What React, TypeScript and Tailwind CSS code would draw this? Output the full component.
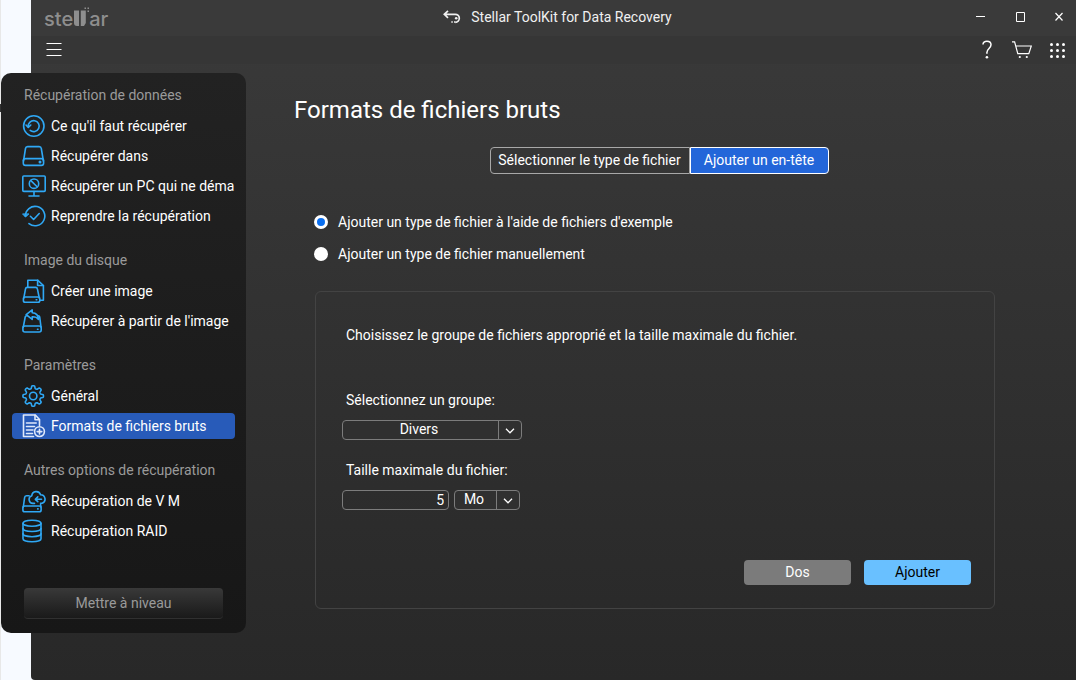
import React, { useState } from 'react';

type IconProps = { children: React.ReactNode };

function Icon({ children }: IconProps) {
  return (
    <svg
      aria-hidden="true"
      viewBox="0 0 24 24"
      className="size-6 shrink-0"
      fill="none"
      stroke="currentColor"
      strokeWidth="1.6"
      strokeLinecap="round"
      strokeLinejoin="round"
    >
      {children}
    </svg>
  );
}

const restoreIcon = (
  <Icon>
    <circle cx="11.8" cy="12" r="10.2" />
    <path d="M6.2 12.6a5.5 5.5 0 1 1 2 3.8" />
    <path d="M4 11l2.3 2.4L8.8 11" />
  </Icon>
);

const driveIcon = (
  <Icon>
    <path d="M1.5 17 3.500 4.500A2.200 2.200 0 0 1 5.700 2.600h11.400A2.200 2.200 0 0 1 19.300 4.500L21.400 17" />
    <rect x="1.300" y="14.600" width="20.300" height="6.800" rx="2.200" />
    <circle cx="18" cy="18" r="0.700" fill="currentColor" />
  </Icon>
);

const monitorIcon = (
  <Icon>
    <rect x="0.8" y="2" width="22.4" height="15.4" rx="1" />
    <path d="M12 17.500v4.200M7 22h10" />
    <circle cx="12" cy="9.700" r="4.700" />
    <path d="M8.900 6.600l6.200 6.200" />
  </Icon>
);

const resumeIcon = (
  <Icon>
    <path d="M3.400 12.200A9.700 9.700 0 1 1 7 19.600" />
    <path d="M.8 10.200l2.700 2.800 3.100-2.800z" fill="currentColor" strokeWidth="1" />
    <path d="M8.400 12.300l3.200 3.200 5.600-6" />
  </Icon>
);

const createImageIcon = (
  <Icon>
    <path d="M5.800 8V1.200h9.800l5.800 5.300v14.800h-3.600" />
    <path d="M15.600 1.200v5.300h5.800" />
    <path d="M1.800 19 3.500 9.900A1.800 1.800 0 0 1 5.200 8.400h8.500a1.800 1.800 0 0 1 1.700 1.500l1.900 9.100" />
    <rect x="1.400" y="18" width="16.400" height="5.200" rx="1.800" />
    <path d="M14.200 20.700h.6" />
  </Icon>
);

const recoverImageIcon = (
  <Icon>
    <path d="M5.200 6.800H4.700A1.500 1.500 0 0 0 3.200 8L1.300 18M15.700 6.800h.6A1.500 1.500 0 0 1 17.700 8l1.300 10" />
    <rect x="0.900" y="17" width="18.300" height="6" rx="2" />
    <path d="M4.200 5.600 10.200.900v2.800c4.400.200 6.200 2.800 6.400 6.800-1.500-2.200-3.400-2.800-6.400-2.700v2.600z" />
    <path d="M15.500 20.200h.500" />
  </Icon>
);

const rawFormatIcon = (
  <Icon>
    <path d="M11.500 22.500h-10V1h11.800l4.200 4.500v6" />
    <path d="M13 1.300v4.500h4.300" />
    <path d="M4.500 9h9.700M4.500 12.500h8M4.500 16h6.500M4.500 19.500h6" />
    <circle cx="17.500" cy="17.600" r="4.900" />
    <path d="M17.500 15.300v4.600M15.200 17.600h4.600" />
  </Icon>
);

const virtualMachineIcon = (
  <Icon>
    <path d="M1.300 18 2.600 8.600A2 2 0 0 1 4.500 6.800h2.600M18.600 15.500l.3 2.500" />
    <rect x="0.900" y="17" width="18.200" height="5.800" rx="1.800" />
    <path d="M12.500 14.400H11a3.900 3.900 0 0 1-1.200-7.600A4.500 4.500 0 0 1 18.600 5.800a4.400 4.400 0 0 1 1.600 8.500h-1.700" />
    <path d="M19.500 10.300h-6M15.800 7.900l-2.500 2.400 2.500 2.400" />
    <path d="M15.700 19.900h.4" />
  </Icon>
);

const raidIcon = (
  <Icon>
    <ellipse cx="10" cy="4.200" rx="9" ry="3" />
    <path d="M1 4.200v15.600c0 1.700 4 3 9 3s9-1.300 9-3V4.200" />
    <path d="M1 9.500c0 1.700 4 3 9 3s9-1.300 9-3M1 14.700c0 1.700 4 3 9 3s9-1.300 9-3" />
  </Icon>
);

// Outline of a gear with eight rounded teeth, one of them pointing up.
const gearPoints = Array.from({ length: 120 }, (_, i) => {
  const angle = (i / 120) * Math.PI * 2;
  const radius = 8.900 + 1.400 * Math.tanh(2.200 * Math.cos(8 * angle));
  return `${(11.200 + radius * Math.sin(angle)).toFixed(2)},${(12 - radius * Math.cos(angle)).toFixed(2)}`;
}).join(' ');

const settingsIcon = (
  <Icon>
    <polygon points={gearPoints} />
    <circle cx="11.200" cy="12" r="3.700" />
  </Icon>
);

const sections = [
  {
    title: 'Récupération de données',
    items: [
      { label: "Ce qu'il faut récupérer", icon: restoreIcon },
      { label: 'Récupérer dans', icon: driveIcon },
      { label: 'Récupérer un PC qui ne déma', icon: monitorIcon },
      { label: 'Reprendre la récupération', icon: resumeIcon },
    ],
  },
  {
    title: 'Image du disque',
    items: [
      { label: 'Créer une image', icon: createImageIcon },
      { label: "Récupérer à partir de l'image", icon: recoverImageIcon },
    ],
  },
  {
    title: 'Paramètres',
    items: [
      { label: 'Général', icon: settingsIcon },
      { label: 'Formats de fichiers bruts', icon: rawFormatIcon, active: true },
    ],
  },
  {
    title: 'Autres options de récupération',
    items: [
      { label: 'Récupération de V M', icon: virtualMachineIcon },
      { label: 'Récupération RAID', icon: raidIcon },
    ],
  },
];

function Logo() {
  return (
    <div className="mt-1 flex items-end font-['Inter',sans-serif] text-xl leading-5 font-medium text-[#8e8e8e]">
      <span>ste</span>
      <svg aria-hidden="true" viewBox="0 0 16 20" className="h-5 w-4 overflow-visible" fill="currentColor">
        <path d="M1 1.500h5v15.500H4Q1 17 1 14zM7.800 1.500h5v12.500L11 17H7.800z" />
        <path d="M11.500-1.500H13V0h-1.500zM14.500-1.500H16V0h-1.500zM14.500 1.500H16V3h-1.500z" />
      </svg>
      <span>ar</span>
    </div>
  );
}

function TitleBar() {
  return (
    <div className="grid h-9 grid-cols-[1fr_auto_1fr] items-center bg-[#3a3a3a] pr-[5px] pb-0.5 pl-[13px]">
      <Logo />
      <div className="flex items-center gap-2.5 text-[#f0f0f0]">
        <svg aria-hidden="true" viewBox="0 0 18 14" className="h-3.5 w-[18px]" fill="none" stroke="currentColor">
          <path d="M5 .8 1.300 4.300 5 7.800M1.500 4.300h10.800a4 4 0 0 1 0 8" strokeWidth="1.700" />
          <circle cx="13.200" cy="8.300" r="1.300" fill="currentColor" stroke="none" />
          <path d="M8.300 12h1.500M11 12h1.500" strokeWidth="1.400" />
        </svg>
        <span>Stellar ToolKit for Data Recovery</span>
      </div>
      <div className="flex justify-end gap-[15px]">
        <button aria-label="Réduire" className="grid size-6 place-items-center">
          <svg viewBox="0 0 10 10" className="size-2.5" stroke="currentColor">
            <path d="M0 4.500h9" />
          </svg>
        </button>
        <button aria-label="Agrandir" className="grid size-6 place-items-center">
          <svg viewBox="0 0 10 10" className="size-2.5" fill="none" stroke="currentColor">
            <path d="M1.500.5h8v9h-8z" />
          </svg>
        </button>
        <button aria-label="Fermer" className="grid size-6 place-items-center">
          <svg viewBox="0 0 10 10" className="size-2.5" stroke="currentColor" strokeWidth="1.200">
            <path d="M1.500 1l7 7.500M8.500 1l-7 7.500" />
          </svg>
        </button>
      </div>
    </div>
  );
}

function ToolBar() {
  return (
    <div className="mb-[9px] flex h-7 items-center justify-between bg-[#363636] pr-[7px] pl-[11px]">
      <button aria-label="Menu" className="grid size-6 place-items-center">
        <svg viewBox="0 0 16 14" className="h-3.5 w-4" stroke="currentColor">
          <path d="M.5.500h15M.5 6.500h15M.5 12.500h15" strokeWidth="1.200" />
        </svg>
      </button>
      <div className="flex gap-[11px]">
        <button aria-label="Aide" className="grid size-6 place-items-center">
          <svg viewBox="0 0 10 20" className="h-5 w-2.5" fill="none" stroke="currentColor" strokeWidth="1.500">
            <path d="M1 4.500C1 2.500 2.600 1.200 4.900 1.200S9 2.500 9 4.800C9 8.300 4.900 8.600 4.900 12.500v1.200" />
            <circle cx="4.900" cy="17.300" r="1.300" fill="currentColor" stroke="none" />
          </svg>
        </button>
        <button aria-label="Panier" className="grid size-6 place-items-center">
          <svg viewBox="0 0 20 18" className="h-[18px] w-5" fill="none" stroke="currentColor" strokeWidth="1.200">
            <path d="M0 .8h2.600L5.800 12.600h11L19.300 5H3.800" />
            <circle cx="7.800" cy="16" r="1.100" fill="currentColor" stroke="none" />
            <circle cx="14.800" cy="16" r="1.100" fill="currentColor" stroke="none" />
          </svg>
        </button>
        <button aria-label="Applications" className="grid size-6 place-items-center">
          <svg viewBox="0 0 16 16" className="size-4" fill="currentColor">
            {[2.5, 8.500, 14.500].map((y) =>
              [2.5, 8.500, 14.500].map((x) => <circle key={`${x}-${y}`} cx={x} cy={y} r="1.500" />),
            )}
          </svg>
        </button>
      </div>
    </div>
  );
}

function Sidebar() {
  return (
    <aside className="-ml-[30px] flex w-[245px] shrink-0 flex-col self-start rounded-[10px] bg-linear-to-b from-[#222222] to-[#171717] px-[11px] pt-[7px] pb-3.5">
      <nav className="flex flex-col gap-4">
        {sections.map((section) => (
          <section key={section.title}>
            <h2 className="mb-[3px] pl-3 leading-[30px] text-[#9a9a9a]">{section.title}</h2>
            <ul className="flex flex-col gap-1">
              {section.items.map((item) => (
                <li key={item.label}>
                  <a
                    href="#"
                    className={
                      'active' in item && item.active
                        ? 'flex h-[26px] items-center gap-[5px] rounded bg-[#285bb9] pl-2.5 text-[#dfe9fb]'
                        : 'flex h-[26px] items-center gap-[5px] rounded pl-2.5 text-[#2fa8f5]'
                    }
                  >
                    {item.icon}
                    <span className="whitespace-nowrap text-white">{item.label}</span>
                  </a>
                </li>
              ))}
            </ul>
          </section>
        ))}
      </nav>
      <button className="mx-3 mt-11 h-[31px] rounded border-b border-[#303030] bg-linear-to-b from-[#393939] to-[#1a1a1a] text-[#9a9a9a]">
        Mettre à niveau
      </button>
    </aside>
  );
}

type DropDownProps = { id: string; label?: string; options: string[]; wide?: boolean };

function DropDown({ id, label, options, wide }: DropDownProps) {
  return (
    <div className={wide ? 'relative h-5 w-[180px]' : 'relative h-5 w-[66px]'}>
      <select
        id={id}
        aria-label={label}
        className="block h-5 w-full appearance-none rounded border border-[#7c7c7c] bg-[#303030] pr-[26px] pb-0.5 text-center leading-4 [text-align-last:center]"
      >
        {options.map((option) => (
          <option key={option}>{option}</option>
        ))}
      </select>
      <span className="pointer-events-none absolute inset-y-px right-px grid w-[23px] place-items-center border-l border-[#7c7c7c]">
        <svg aria-hidden="true" viewBox="0 0 10 6" className="mt-0.5 h-1.5 w-2.5" fill="none" stroke="currentColor" strokeWidth="1.300">
          <path d="M1 .8l4 4 4-4" />
        </svg>
      </span>
    </div>
  );
}

const radioClass =
  'size-3.5 shrink-0 appearance-none rounded-full bg-white checked:border-[3px] checked:border-white checked:bg-[#0a6ff0]';

export default function App() {
  const [mode, setMode] = useState('sample');
  const [size, setSize] = useState('5');

  return (
    <div className="flex min-h-screen bg-[#f7faff] font-['Roboto',sans-serif] text-sm text-white">
      <div className="w-px bg-[#e8e8e8] pt-[104px]">
        <div className="h-2 bg-[#333333]" />
      </div>
      <div className="ml-[30px] flex min-w-0 flex-1 flex-col rounded-bl bg-linear-to-b from-[#3a3a3a] to-[#282828]">
        <header>
          <TitleBar />
          <ToolBar />
        </header>
        <div className="flex flex-1">
          <Sidebar />
          <main className="min-w-0 flex-1 pt-[21px] pr-[52px] pl-12">
            <h1 className="text-2xl leading-8">Formats de fichiers bruts</h1>

            <div className="mt-[21px] flex justify-center">
              <button className="h-[27px] w-[200px] rounded-l border border-[#a8a8a8] pb-0.5 whitespace-nowrap">
                Sélectionner le type de fichier
              </button>
              <button className="h-[27px] w-[139px] rounded-r border border-white bg-[#2366d9] pb-0.5 whitespace-nowrap">
                Ajouter un en-tête
              </button>
            </div>

            <div className="mt-[38px] ml-5 flex flex-col items-start gap-3">
              <label className="flex h-5 items-center gap-2.5">
                <input
                  type="radio"
                  name="mode"
                  className={radioClass}
                  checked={mode === 'sample'}
                  onChange={() => setMode('sample')}
                />
                Ajouter un type de fichier à l'aide de fichiers d'exemple
              </label>
              <label className="flex h-5 items-center gap-2.5">
                <input
                  type="radio"
                  name="mode"
                  className={radioClass}
                  checked={mode === 'manual'}
                  onChange={() => setMode('manual')}
                />
                Ajouter un type de fichier manuellement
              </label>
            </div>

            <form className="mt-[27px] mr-[29px] ml-[21px] rounded-md border border-[#434343] pt-[33px] pr-[23px] pb-[23px] pl-[26px]">
              <p className="pl-1 leading-5">
                Choisissez le groupe de fichiers approprié et la taille maximale du fichier.
              </p>
              <label htmlFor="group" className="mt-[45px] mb-2.5 block pl-1 leading-5">
                Sélectionnez un groupe:
              </label>
              <DropDown id="group" options={['Divers', 'Documents', 'Photos']} wide />
              <label htmlFor="size" className="mt-5 mb-2.5 block pl-1 leading-5">
                Taille maximale du fichier:
              </label>
              <div className="flex gap-[5px]">
                <input
                  id="size"
                  type="text"
                  value={size}
                  onChange={(event) => setSize(event.target.value)}
                  className="h-5 w-[107px] rounded border border-[#7c7c7c] bg-transparent px-1 text-right leading-[18px]"
                />
                <DropDown id="unit" label="Unité" options={['Mo', 'Ko', 'Go']} />
              </div>
              <div className="mt-[50px] flex justify-end gap-[13px]">
                <button type="button" className="h-[25px] w-[107px] rounded bg-[#7b7b7b] pb-0.5">
                  Dos
                </button>
                <button type="button" className="h-[25px] w-[107px] rounded bg-[#69c0ff] pb-0.5 text-black">
                  Ajouter
                </button>
              </div>
            </form>
          </main>
        </div>
      </div>
    </div>
  );
}
